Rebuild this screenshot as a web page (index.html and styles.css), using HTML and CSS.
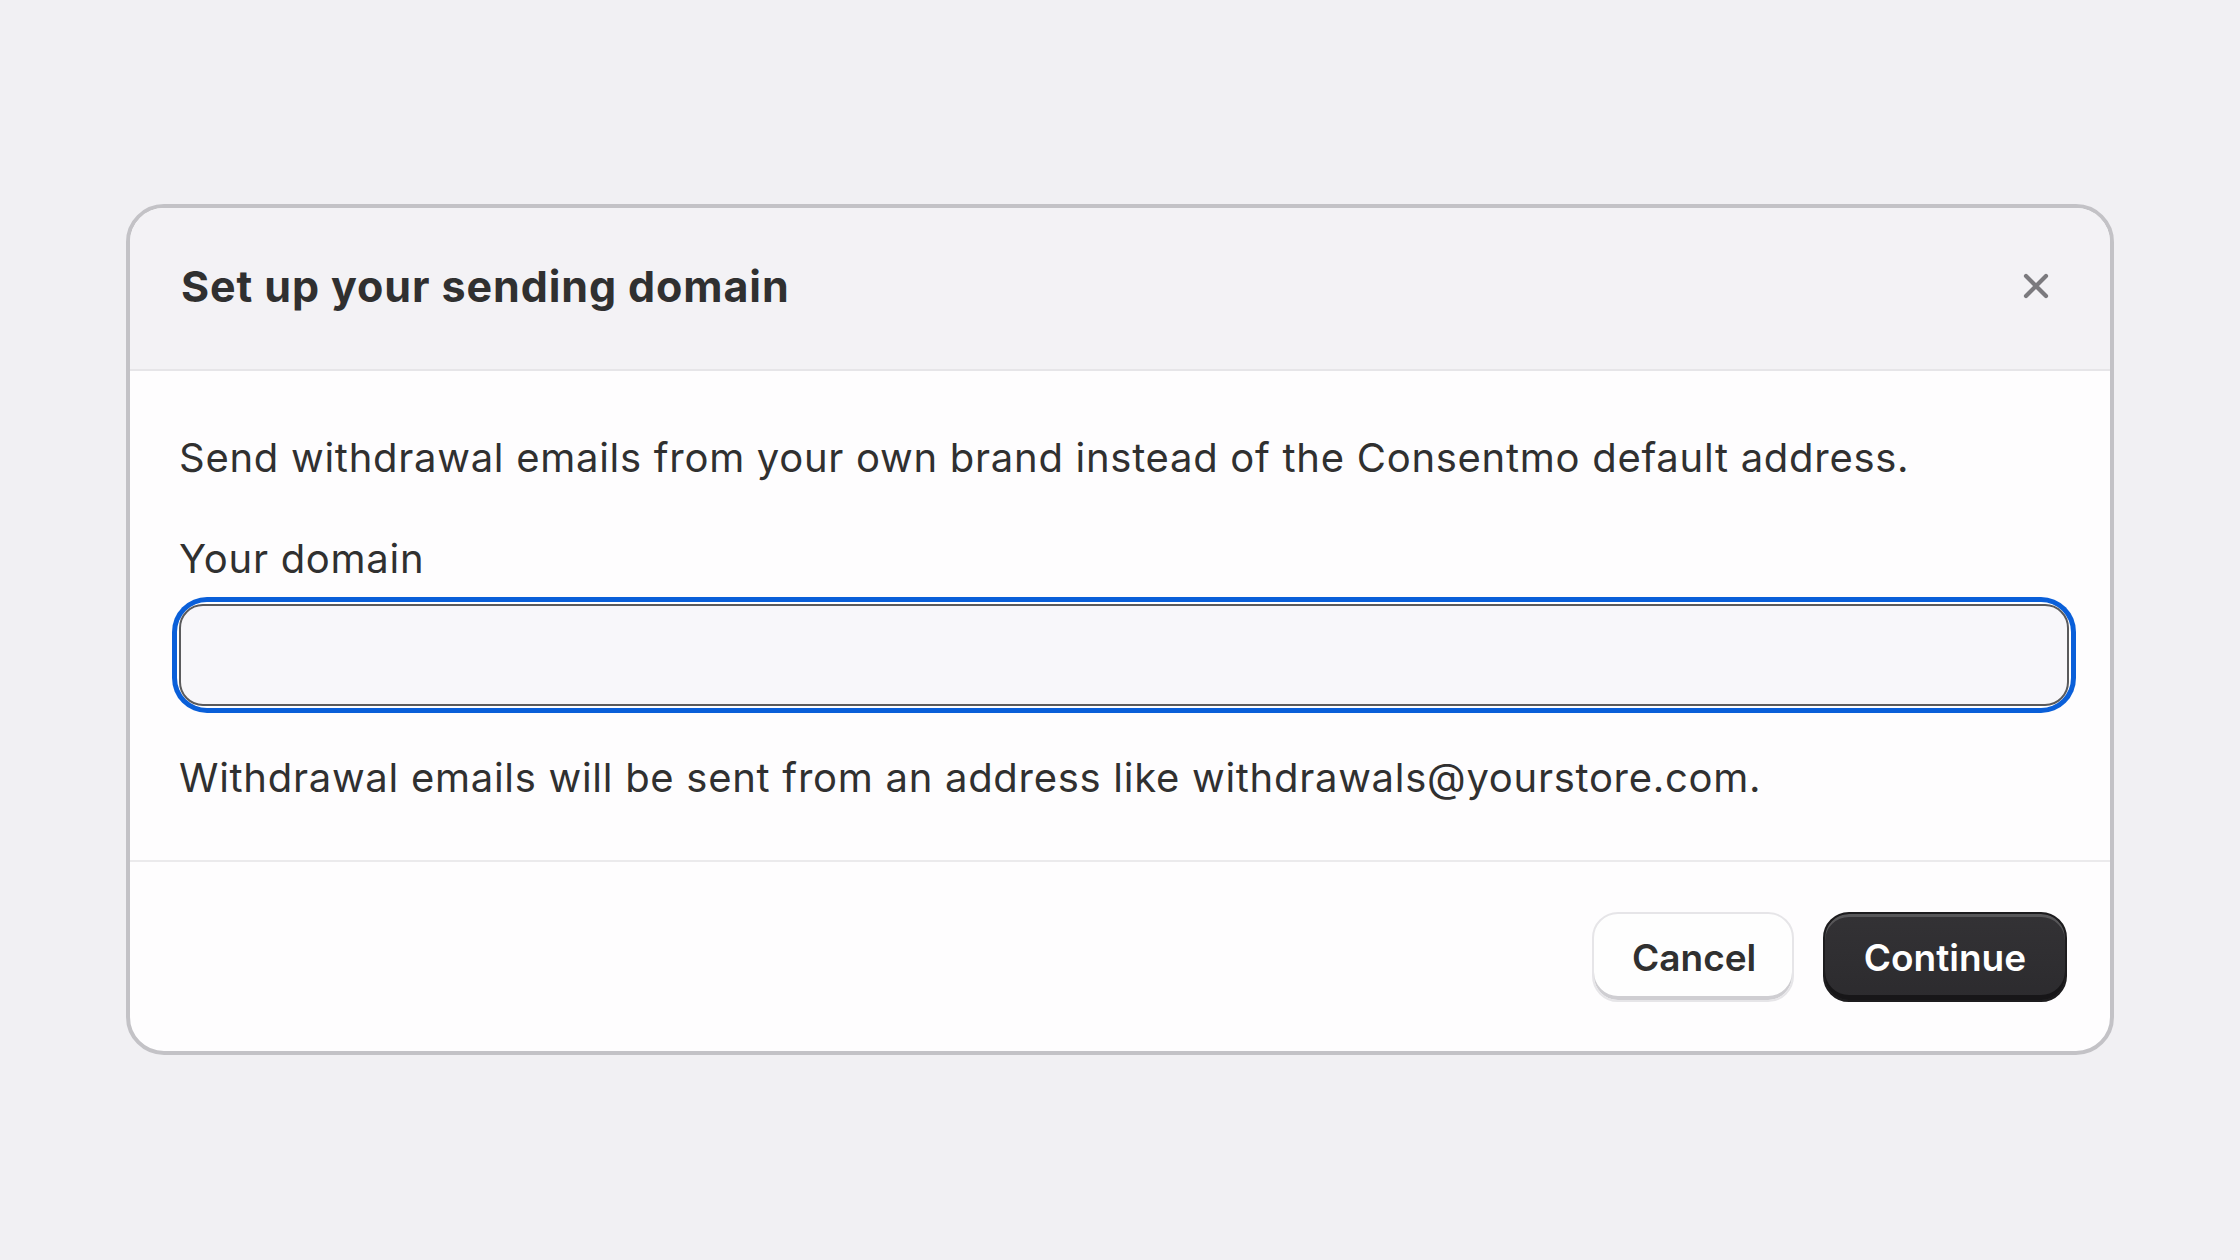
FILE: index.html
```html
<!DOCTYPE html>
<html lang="en">
<head>
  <meta charset="UTF-8" />
  <title>Sending domain</title>
  <link rel="stylesheet" href="styles.css">
</head>
<body>
  <div class="modal">
    <div class="modal-header">
      <h2 class="modal-title">Set up your sending domain</h2>
      <button class="close-btn" aria-label="Close">
        <svg viewBox="0 0 28 28" width="28" height="28">
          <path d="M4 4 L24 24 M24 4 L4 24" stroke="currentColor" stroke-width="4.2" stroke-linecap="round" />
        </svg>
      </button>
    </div>

    <div class="modal-body">
      <p class="intro">Send withdrawal emails from your own brand instead of the Consentmo default address.</p>
      <label class="field-label" for="domain">Your domain</label>
      <div class="field-ring">
        <input class="field-input" id="domain" type="text" />
      </div>
      <p class="help">Withdrawal emails will be sent from an address like withdrawals@yourstore.com.</p>
    </div>

    <div class="modal-footer">
      <button class="btn btn-secondary">Cancel</button>
      <button class="btn btn-primary">Continue</button>
    </div>
  </div>
</body>
</html>
```

FILE: styles.css
```css
body {
  font-family: Inter, 'Noto Sans', sans-serif;
  background: #f1f0f3;
  margin: 0;
  height: 100vh;
  color: #303030;
}

.modal {
  position: relative;
  top: 204px;
  margin-left: 126px;
  width: 1988px;
  border: 4px solid #c3c2c6;
  border-radius: 38px;
  background: #fefdfe;
  overflow: hidden;
  box-sizing: border-box;
}

/* header */
.modal-header {
  display: flex;
  align-items: center;
  justify-content: space-between;
  height: 163px;
  padding: 0 60px 6px 51px;
  box-sizing: border-box;
  background: #f3f2f5;
  border-bottom: 2px solid #e6e5e8;
}

.modal-title {
  margin: 0;
  font-size: 43px;
  font-weight: 700;
  letter-spacing: 0.9px;
  color: #303030;
}

.close-btn {
  border: none;
  background: none;
  padding: 0;
  width: 28px;
  height: 28px;
  color: #7b7a7e;
  cursor: pointer;
}

/* body */
.modal-body {
  padding: 59px 41px 54px 49px;
  border-bottom: 2px solid #ebeaec;
}

.intro,
.help,
.field-label {
  margin: 0;
  font-size: 40px;
  line-height: 56px;
  letter-spacing: 0.72px;
  color: #303030;
}

.field-label {
  display: block;
  margin-top: 45px;
}

.field-ring {
  margin-top: 17px;
  border-radius: 28px;
  box-shadow: 0 0 0 2px #ffffff, 0 0 0 7px #0a5fd9;
}

.field-input {
  display: block;
  width: 100%;
  height: 102px;
  box-sizing: border-box;
  border: 2px solid #5a5a5c;
  border-radius: 24px;
  background: #f8f7fa;
  font: inherit;
  font-size: 40px;
  padding: 0 36px;
  outline: none;
}

.help {
  margin-top: 44px;
}

/* footer */
.modal-footer {
  display: flex;
  justify-content: flex-end;
  gap: 29px;
  padding: 50px 43px 49px 49px;
}

.btn {
  height: 90px;
  border-radius: 26px;
  font-family: inherit;
  font-size: 37px;
  font-weight: 600;
  padding: 0 38px;
  cursor: pointer;
}

.btn-secondary {
  width: 202px;
  background: #fefefe;
  color: #303030;
  border: 2px solid #e6e5e8;
  box-shadow: inset 0 -4px 0 #cfced2;
}

.btn-primary {
  width: 244px;
  background: linear-gradient(#333235, #2c2b2e);
  color: #ffffff;
  border: 2px solid #1d1c1e;
  box-shadow: inset 0 3px 0 rgba(255, 255, 255, 0.18), inset 0 -5px 0 #171618;
}
```
